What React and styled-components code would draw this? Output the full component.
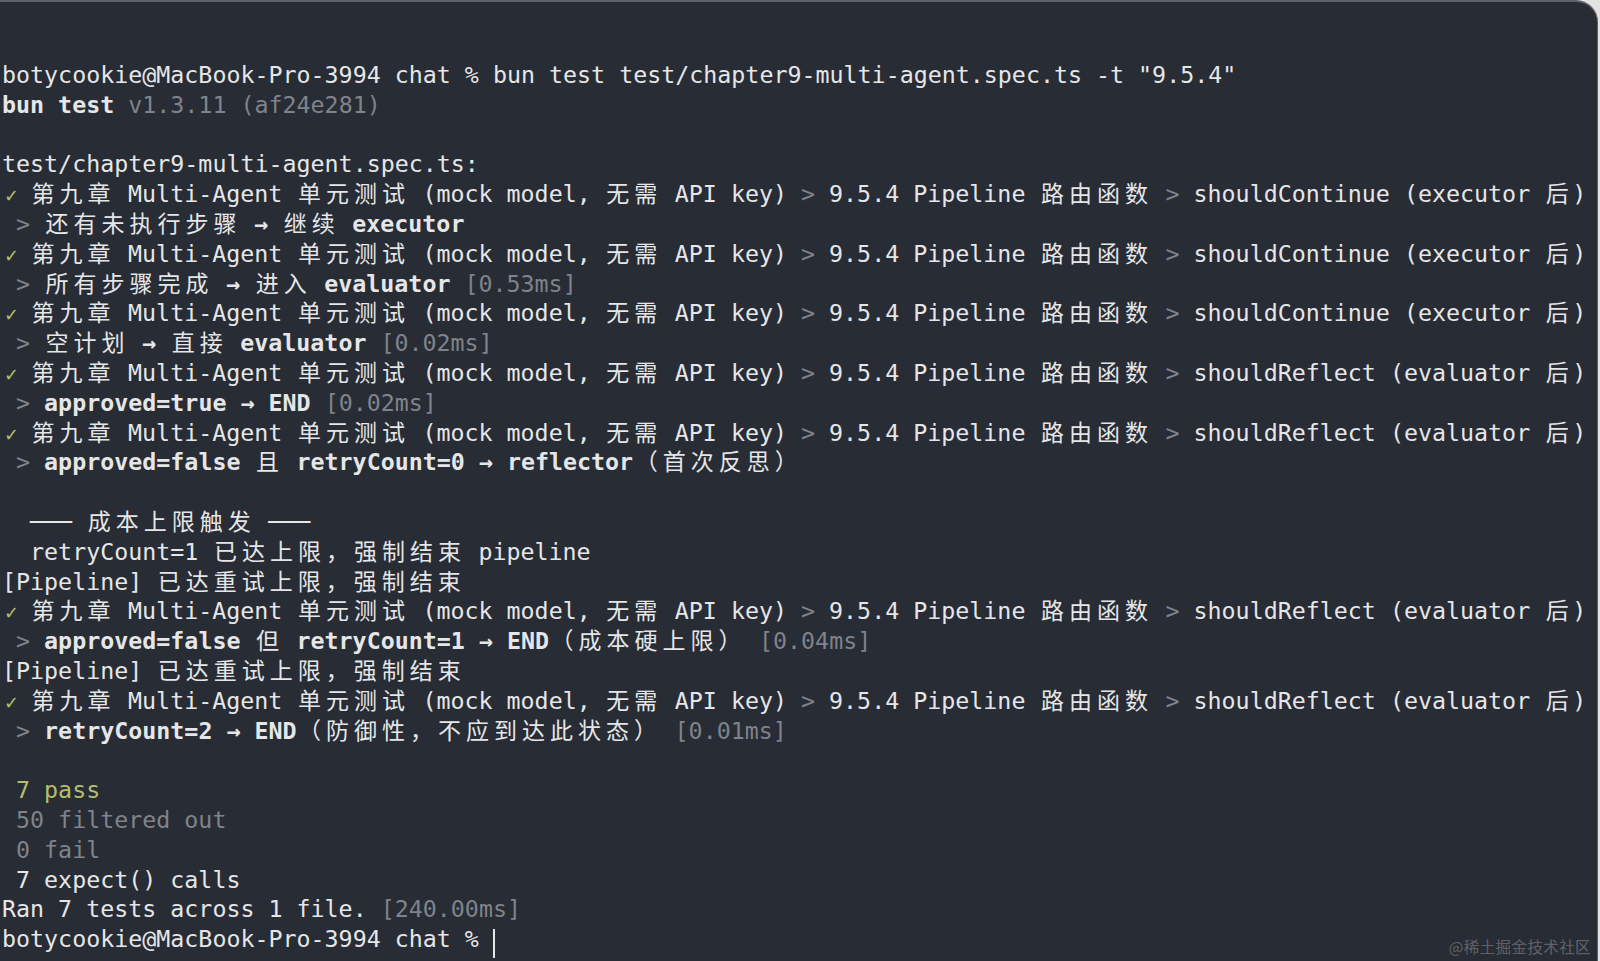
import React from 'react';
import styled, { createGlobalStyle } from 'styled-components';

const Global = createGlobalStyle`
  html, body {
    margin: 0;
    padding: 0;
    background: #e2e2e2;
    overflow: hidden;
  }
`;

const Window = styled.div`
  position: relative;
  box-sizing: border-box;
  width: 1598px;
  height: 961px;
  background: #282c34;
  border-top: 2px solid #5e6167;
  border-right: 1px solid #5e6167;
  border-top-right-radius: 22px;
  padding: 58px 0 0 2px;
  overflow: hidden;
`;

const Screen = styled.div`
  display: flex;
  flex-direction: column;
  font-family: "DejaVu Sans Mono", "Liberation Mono", monospace;
  font-size: 23.3px;
  color: #e5e6e8;
`;

const Row = styled.div`
  height: 29.8px;
  line-height: 29.8px;
  white-space: pre;
`;

const tones = {
  text: '#e5e6e8',
  dim: '#7f838b',
  green: '#b4be6d',
};

const Run = styled.span`
  color: ${(p) => tones[p.$tone || 'text']};
  font-weight: ${(p) => (p.$bold ? 700 : 400)};
`;

const Wide = styled.span`
  display: inline-block;
  box-sizing: border-box;
  width: 28px;
  padding-left: 1.5px;
  font-family: "Noto Sans CJK SC", sans-serif;
  font-size: 23px;
  font-weight: 400;
  line-height: 20px;
`;

const Check = styled.span`
  display: inline-block;
  box-sizing: border-box;
  width: 14px;
  padding-left: 2px;
  font-family: "DejaVu Sans", sans-serif;
  font-size: 18px;
  line-height: 20px;
  color: ${tones.green};
`;

const Cursor = styled.span`
  display: inline-block;
  width: 2px;
  height: 29px;
  background: #e6e6e6;
  vertical-align: -11px;
`;

const Watermark = styled.div`
  position: absolute;
  right: 6px;
  bottom: 6px;
  font-family: "Noto Sans CJK SC", sans-serif;
  font-size: 15.5px;
  letter-spacing: 0.4px;
  line-height: 18px;
  color: rgba(255, 255, 255, 0.27);
`;

const WIDE = /[\u1100-\u115F\u2E80-\u303E\u3041-\u33FF\u3400-\u4DBF\u4E00-\u9FFF\uAC00-\uD7A3\uF900-\uFAFF\uFE30-\uFE4F\uFF00-\uFF60\uFFE0-\uFFE6]/;

function Cells({ text }) {
  const out = [];
  let buf = '';
  [...text].forEach((ch, i) => {
    if (WIDE.test(ch)) {
      if (buf) {
        out.push(buf);
        buf = '';
      }
      out.push(<Wide key={i}>{ch}</Wide>);
    } else {
      buf += ch;
    }
  });
  if (buf) out.push(buf);
  return <>{out}</>;
}

const PROMPT = 'botycookie@MacBook-Pro-3994 chat % ';

const test = (last) => [
  { check: true },
  { t: ' 第九章 Multi-Agent 单元测试 (mock model, 无需 API key)' },
  { t: ' > ', tone: 'dim' },
  { t: '9.5.4 Pipeline 路由函数' },
  { t: ' > ', tone: 'dim' },
  { t: last },
];

const sub = (body, time) => [
  { t: ' ' },
  { t: '>', tone: 'dim' },
  { t: ' ' },
  { t: body, bold: true },
  ...(time ? [{ t: ' ' }, { t: time, tone: 'dim' }] : []),
];

const CONT = 'shouldContinue (executor 后)';
const REFL = 'shouldReflect (evaluator 后)';

const lines = [
  [{ t: PROMPT + 'bun test test/chapter9-multi-agent.spec.ts -t "9.5.4"' }],
  [{ t: 'bun test', bold: true }, { t: ' v1.3.11 (af24e281)', tone: 'dim' }],
  [],
  [{ t: 'test/chapter9-multi-agent.spec.ts:' }],
  test(CONT),
  sub('还有未执行步骤 → 继续 executor'),
  test(CONT),
  sub('所有步骤完成 → 进入 evaluator', '[0.53ms]'),
  test(CONT),
  sub('空计划 → 直接 evaluator', '[0.02ms]'),
  test(REFL),
  sub('approved=true → END', '[0.02ms]'),
  test(REFL),
  sub('approved=false 且 retryCount=0 → reflector（首次反思）'),
  [],
  [{ t: '  ─── 成本上限触发 ───' }],
  [{ t: '  retryCount=1 已达上限，强制结束 pipeline' }],
  [{ t: '[Pipeline] 已达重试上限，强制结束' }],
  test(REFL),
  sub('approved=false 但 retryCount=1 → END（成本硬上限）', '[0.04ms]'),
  [{ t: '[Pipeline] 已达重试上限，强制结束' }],
  test(REFL),
  sub('retryCount=2 → END（防御性，不应到达此状态）', '[0.01ms]'),
  [],
  [{ t: ' 7 pass', tone: 'green' }],
  [{ t: ' 50 filtered out', tone: 'dim' }],
  [{ t: ' 0 fail', tone: 'dim' }],
  [{ t: ' 7 expect() calls' }],
  [{ t: 'Ran 7 tests across 1 file.' }, { t: ' [240.00ms]', tone: 'dim' }],
  [{ t: PROMPT }, { cursor: true }],
];

export default function App() {
  return (
    <>
      <Global />
      <Window>
        <Screen>
          {lines.map((segs, i) => (
            <Row key={i}>
              {segs.length === 0 ? ' ' : null}
              {segs.map((s, j) => {
                if (s.check) return <Check key={j}>✓</Check>;
                if (s.cursor) return <Cursor key={j} />;
                return (
                  <Run key={j} $tone={s.tone} $bold={s.bold}>
                    <Cells text={s.t} />
                  </Run>
                );
              })}
            </Row>
          ))}
        </Screen>
        <Watermark>@稀土掘金技术社区</Watermark>
      </Window>
    </>
  );
}
